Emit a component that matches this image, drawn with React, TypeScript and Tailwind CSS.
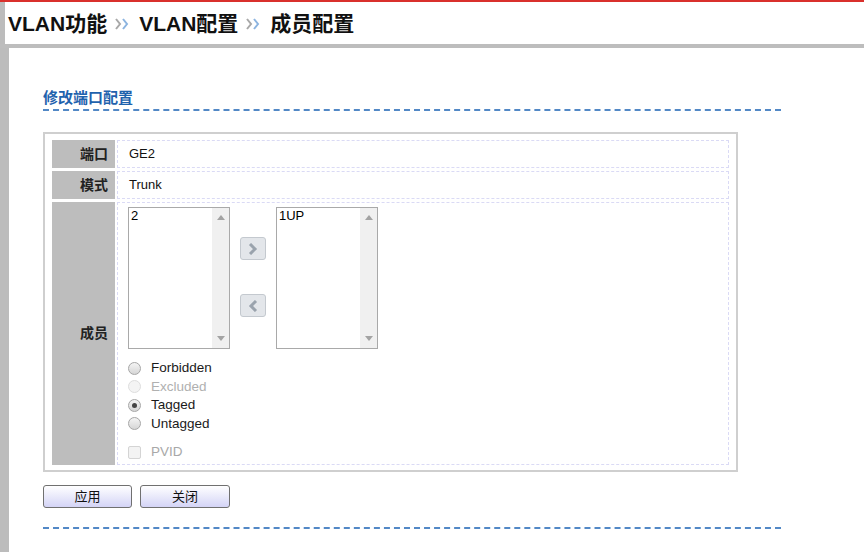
import React from "react";

const FONT = { fontFamily: '"Liberation Sans", Arial, "Noto Sans CJK SC", sans-serif' };

function Crumbs() {
  return (
    <svg width="16" height="14" viewBox="0 0 16 14" className="ml-[7px] mr-[9px]">
      <polyline points="2,2 6,7 2,12" fill="none" stroke="#a8a8a8" strokeWidth="2" />
      <polyline points="9,2 13,7 9,12" fill="none" stroke="#8cb4e0" strokeWidth="2" />
    </svg>
  );
}

function ListBox({ item }: { item: string }) {
  return (
    <div className="flex w-[102px] h-[142px] border border-[#a9a9a9] bg-white">
      <div className="flex-1 pl-[2px] text-[13px] leading-[16px] text-black">{item}</div>
      <div className="w-[17px] bg-[#f0f0f0] flex flex-col items-center justify-between py-[7px]">
        <svg width="8" height="5"><polygon points="0,5 4,0 8,5" fill="#a3a3a3" /></svg>
        <svg width="8" height="5"><polygon points="0,0 8,0 4,5" fill="#a3a3a3" /></svg>
      </div>
    </div>
  );
}

function ArrowBtn({ dir }: { dir: "r" | "l" }) {
  return (
    <div className="w-[26px] h-[23px] rounded-[3px] border border-[#c4c9cf] bg-[#e3e6ea] flex items-center justify-center">
      <svg width="10" height="12" viewBox="0 0 10 12">
        <polyline
          points={dir === "r" ? "2,1 7,6 2,11" : "8,1 3,6 8,11"}
          fill="none"
          stroke="#9aa3ad"
          strokeWidth="3"
        />
      </svg>
    </div>
  );
}

function Radio({ label, checked, disabled }: { label: string; checked?: boolean; disabled?: boolean }) {
  return (
    <div className="flex items-center h-[18.5px]">
      <span
        className={`w-[13px] h-[13px] rounded-full border flex items-center justify-center ${
          disabled ? "border-[#dedede] bg-[#f4f4f4]" : "border-[#a6a6a6] bg-gradient-to-b from-[#f4f4f4] to-[#d6d6d6]"
        }`}
      >
        {checked && <span className="w-[5px] h-[5px] rounded-full bg-[#444]" />}
      </span>
      <span className={`ml-[10px] text-[13.5px] ${disabled ? "text-[#b0b0b0]" : "text-[#1a1a1a]"}`}>{label}</span>
    </div>
  );
}

function Row({ label, h, children }: { label: string; h: string; children: React.ReactNode }) {
  return (
    <div className={`flex gap-[2px] ${h}`}>
      <div className="w-[63px] bg-[#bdbdbd] flex items-center justify-end pr-[7px] text-[14px] font-bold text-[#222]">
        {label}
      </div>
      <div className="flex-1 border border-dashed border-[#dadaf5]">{children}</div>
    </div>
  );
}

export default function App() {
  return (
    <div className="w-[864px] h-[552px] bg-white overflow-hidden flex flex-col" style={FONT}>
      <div className="h-[2px] bg-[#d9302c]" />
      <div className="flex h-[42px] border-l-[5px] border-[#bcbcbc]">
        <div className="flex items-center pl-[3px] pt-[2px] text-[21px] font-bold text-[#111]">
          <span>VLAN功能</span>
          <Crumbs />
          <span>VLAN配置</span>
          <Crumbs />
          <span>成员配置</span>
        </div>
      </div>
      <div className="h-[4px] bg-[#bdbdbd]" />
      <div className="flex flex-1">
        <div className="w-[9px] bg-[#bcbcbc]" />
        <div className="pl-[34px] pt-[40px] flex flex-col">
          <div className="w-[738px] text-[15px] font-bold text-[#1f62ad] leading-[20px] pb-[1px] border-b-2 border-dashed border-[#5288c6]">
            修改端口配置
          </div>
          <div className="mt-[21px] w-[695px] h-[340px] border-2 border-[#cfcfcf] px-[7px] pt-[6px] flex flex-col gap-[3px]">
            <Row label="端口" h="h-[28px]">
              <div className="h-full flex items-center pl-[11px] text-[13px] text-[#111]">GE2</div>
            </Row>
            <Row label="模式" h="h-[28px]">
              <div className="h-full flex items-center pl-[11px] text-[13px] text-[#111]">Trunk</div>
            </Row>
            <Row label="成员" h="h-[263px]">
              <div className="pl-[10px] pt-[4px] flex flex-col">
                <div className="flex items-start">
                  <ListBox item="2" />
                  <div className="w-[46px] flex flex-col items-center pt-[30px] gap-[34px]">
                    <ArrowBtn dir="r" />
                    <ArrowBtn dir="l" />
                  </div>
                  <ListBox item="1UP" />
                </div>
                <div className="mt-[10px] flex flex-col">
                  <Radio label="Forbidden" />
                  <Radio label="Excluded" disabled />
                  <Radio label="Tagged" checked />
                  <Radio label="Untagged" />
                </div>
                <div className="mt-[9px] flex items-center">
                  <span className="w-[13px] h-[13px] rounded-[2px] border border-[#d4d4d4] bg-[#f3f3f3]" />
                  <span className="ml-[10px] text-[13.5px] text-[#a8a8a8]">PVID</span>
                </div>
              </div>
            </Row>
          </div>
          <div className="mt-[13px] flex gap-[8px]">
            <button className="w-[89px] h-[23px] rounded-[3px] border border-[#707070] bg-gradient-to-b from-white to-[#d4d4f6] text-[13px] text-[#111]">
              应用
            </button>
            <button className="w-[90px] h-[23px] rounded-[3px] border border-[#707070] bg-gradient-to-b from-white to-[#d4d4f6] text-[13px] text-[#111]">
              关闭
            </button>
          </div>
          <div className="mt-[19px] w-[738px] border-b-2 border-dashed border-[#5288c6]" />
        </div>
      </div>
    </div>
  );
}
